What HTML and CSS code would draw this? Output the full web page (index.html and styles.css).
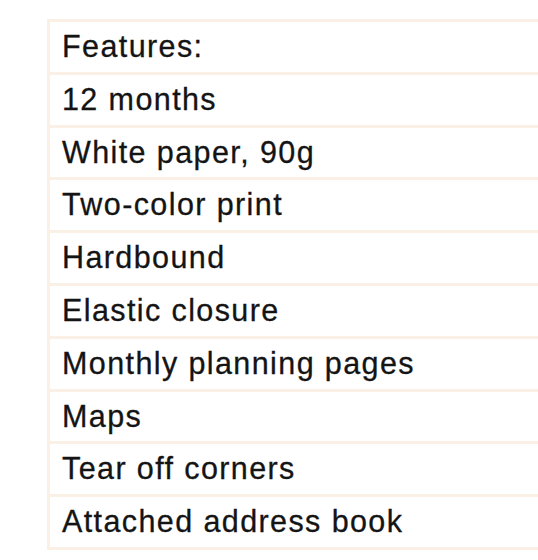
FILE: index.html
```html
<!DOCTYPE html>
<html>
<head>
<meta charset="utf-8">
<link rel="stylesheet" href="styles.css">
</head>
<body>
<div class="features">
  <div class="row">Features:</div>
  <div class="row">12 months</div>
  <div class="row">White paper, 90g</div>
  <div class="row">Two-color print</div>
  <div class="row">Hardbound</div>
  <div class="row">Elastic closure</div>
  <div class="row">Monthly planning pages</div>
  <div class="row">Maps</div>
  <div class="row">Tear off corners</div>
  <div class="row">Attached address book</div>
</div>
</body>
</html>
```
FILE: styles.css
```css
html, body {
  margin: 0;
  padding: 0;
  background: #ffffff;
}
body {
  font-family: "Liberation Sans", Arial, sans-serif;
  color: #141414;
}
.features {
  margin: 19px 0 0 47px;
  border-top: 3px solid #faf0e6;
  border-left: 3px solid #faf0e6;
}
.row {
  border-bottom: 3px solid #faf0e6;
  height: 49.8px;
  line-height: 49.8px;
  padding-left: 12px;
  font-size: 30.5px;
  letter-spacing: 1.4px;
  white-space: nowrap;
  -webkit-text-stroke: 0.3px #141414;
}
```
